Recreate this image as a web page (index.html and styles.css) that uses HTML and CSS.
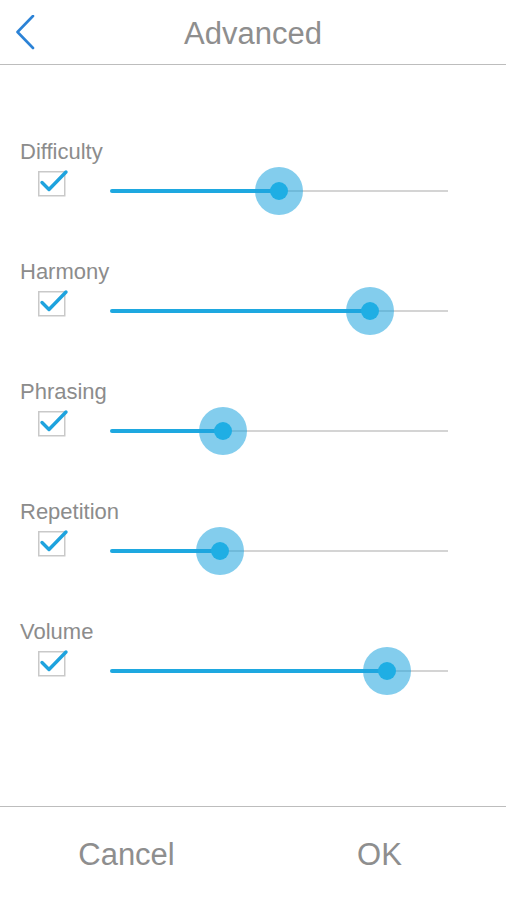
FILE: index.html
```html
<!DOCTYPE html>
<html>
<head>
<meta charset="utf-8">
<link rel="stylesheet" href="styles.css">
</head>
<body>
<div class="screen">
  <header class="header">
    <svg class="back" width="20" height="36" viewBox="0 0 20 36"><path d="M17 1 L1.5 17 L17 33" fill="none" stroke="#2b82d6" stroke-width="2.6" stroke-linecap="round" stroke-linejoin="round"/></svg>
    <div class="title">Advanced</div>
  </header>
  <main class="content">
    <div class="row">
      <div class="label">Difficulty</div>
      <div class="controls">
        <svg class="check" width="30" height="27" viewBox="0 0 30 27"><rect x="0.75" y="1.75" width="26" height="24" fill="#fff" stroke="#c9c9c9" stroke-width="1.5"/><path d="M4 12.5 L11 19.5 L28 2" fill="none" stroke="#1ea3de" stroke-width="3.4" stroke-linecap="round" stroke-linejoin="round"/></svg>
        <div class="slider"><div class="fill" style="width:50%"></div><div class="rest"></div><div class="thumb" style="left:50%"></div></div>
      </div>
    </div>
    <div class="row">
      <div class="label">Harmony</div>
      <div class="controls">
        <svg class="check" width="30" height="27" viewBox="0 0 30 27"><rect x="0.75" y="1.75" width="26" height="24" fill="#fff" stroke="#c9c9c9" stroke-width="1.5"/><path d="M4 12.5 L11 19.5 L28 2" fill="none" stroke="#1ea3de" stroke-width="3.4" stroke-linecap="round" stroke-linejoin="round"/></svg>
        <div class="slider"><div class="fill" style="width:77%"></div><div class="rest"></div><div class="thumb" style="left:77%"></div></div>
      </div>
    </div>
    <div class="row">
      <div class="label">Phrasing</div>
      <div class="controls">
        <svg class="check" width="30" height="27" viewBox="0 0 30 27"><rect x="0.75" y="1.75" width="26" height="24" fill="#fff" stroke="#c9c9c9" stroke-width="1.5"/><path d="M4 12.5 L11 19.5 L28 2" fill="none" stroke="#1ea3de" stroke-width="3.4" stroke-linecap="round" stroke-linejoin="round"/></svg>
        <div class="slider"><div class="fill" style="width:33.4%"></div><div class="rest"></div><div class="thumb" style="left:33.4%"></div></div>
      </div>
    </div>
    <div class="row">
      <div class="label">Repetition</div>
      <div class="controls">
        <svg class="check" width="30" height="27" viewBox="0 0 30 27"><rect x="0.75" y="1.75" width="26" height="24" fill="#fff" stroke="#c9c9c9" stroke-width="1.5"/><path d="M4 12.5 L11 19.5 L28 2" fill="none" stroke="#1ea3de" stroke-width="3.4" stroke-linecap="round" stroke-linejoin="round"/></svg>
        <div class="slider"><div class="fill" style="width:32.5%"></div><div class="rest"></div><div class="thumb" style="left:32.5%"></div></div>
      </div>
    </div>
    <div class="row">
      <div class="label">Volume</div>
      <div class="controls">
        <svg class="check" width="30" height="27" viewBox="0 0 30 27"><rect x="0.75" y="1.75" width="26" height="24" fill="#fff" stroke="#c9c9c9" stroke-width="1.5"/><path d="M4 12.5 L11 19.5 L28 2" fill="none" stroke="#1ea3de" stroke-width="3.4" stroke-linecap="round" stroke-linejoin="round"/></svg>
        <div class="slider"><div class="fill" style="width:82%"></div><div class="rest"></div><div class="thumb" style="left:82%"></div></div>
      </div>
    </div>
  </main>
  <footer class="footer">
    <div class="btn">Cancel</div>
    <div class="btn">OK</div>
  </footer>
</div>
</body>
</html>
```

FILE: styles.css
```css
* { box-sizing: border-box; }
html, body { margin: 0; padding: 0; background: #fff; }
body { font-family: "Liberation Sans", Arial, sans-serif; color: #8c8c8c; }
.screen { width: 506px; height: 900px; display: flex; flex-direction: column; background: #fff; }
.header { height: 65px; border-bottom: 1.5px solid #bdbdbd; position: relative; display: flex; align-items: center; justify-content: center; }
.back { position: absolute; left: 16px; top: 15px; }
.title { font-size: 31px; line-height: 34px; color: #8e8e8e; margin-top: 4px; }
.content { flex: 1; padding-top: 75px; display: flex; flex-direction: column; gap: 46px; }
.row { display: flex; flex-direction: column; }
.label { font-size: 22px; line-height: 24px; padding-left: 20px; color: #8c8c8c; }
.controls { height: 50px; display: flex; align-items: flex-start; padding-left: 38px; }
.check { margin-top: 6px; overflow: visible; flex: none; }
.slider { position: relative; width: 338px; height: 50px; margin-top: 2px; margin-left: 42px; display: flex; align-items: center; }
.fill { height: 4px; background: #1ea8e0; border-radius: 2px; }
.rest { flex: 1; height: 2px; background: #d4d4d4; }
.thumb { position: absolute; top: 1px; width: 48px; height: 48px; margin-left: -24px; border-radius: 50%; background: rgba(30, 164, 222, 0.55); }
.thumb::after { content: ""; position: absolute; left: 15px; top: 15px; width: 18px; height: 18px; border-radius: 50%; background: #1faee4; }
.footer { height: 94px; border-top: 1.5px solid #bdbdbd; display: flex; }
.btn { flex: 1; display: flex; align-items: center; justify-content: center; font-size: 31px; color: #8e8e8e; padding-top: 2px; }
```
